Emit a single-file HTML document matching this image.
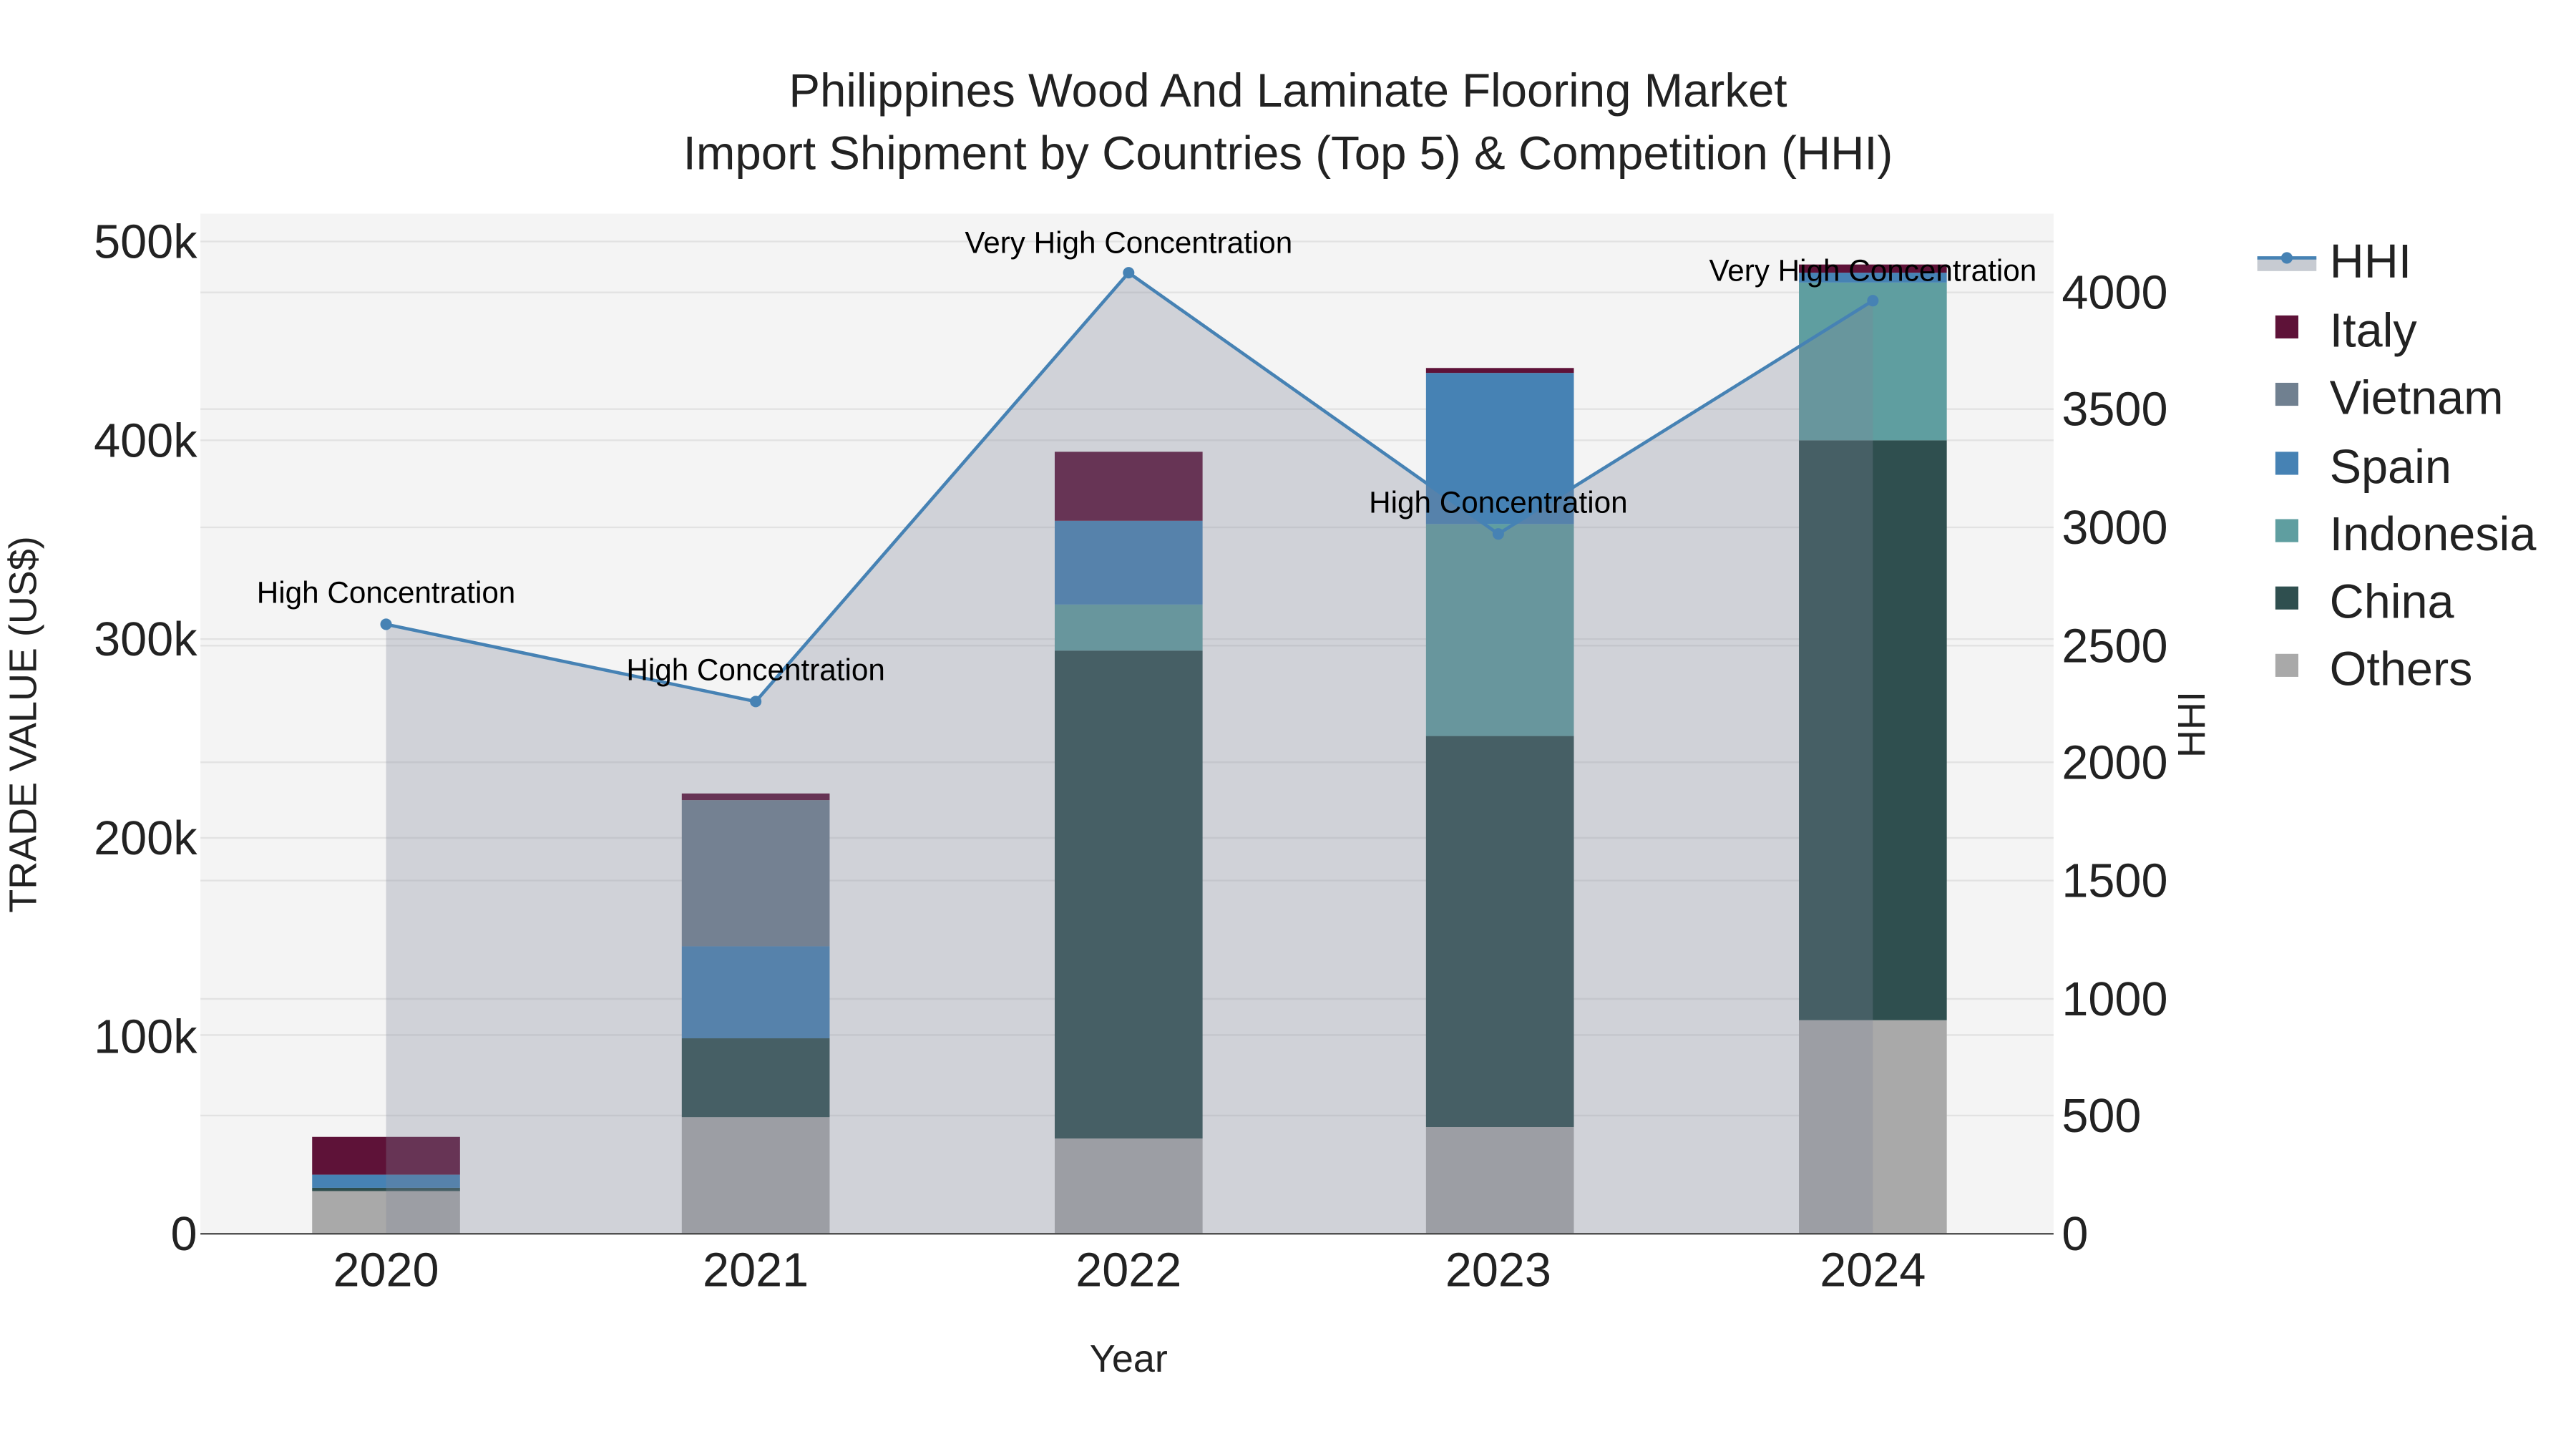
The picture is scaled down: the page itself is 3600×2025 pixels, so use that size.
<!DOCTYPE html>
<html><head><meta charset="utf-8"><style>
html,body{margin:0;padding:0;background:#fff;}
svg{display:block;}
text{font-family:"Liberation Sans",Arial,sans-serif;}
</style></head><body>
<svg width="3600" height="2025" viewBox="0 0 1568 882" xmlns="http://www.w3.org/2000/svg">
<rect width="1568" height="882" fill="#fff"/>
<rect x="122" y="130" width="1128" height="621" fill="#f4f4f4"/>
<g stroke="#e2e2e2" stroke-width="1">
<line x1="122" x2="1250" y1="147" y2="147"/><line x1="122" x2="1250" y1="268" y2="268"/>
<line x1="122" x2="1250" y1="389" y2="389"/><line x1="122" x2="1250" y1="510" y2="510"/>
<line x1="122" x2="1250" y1="630" y2="630"/>
<line x1="122" x2="1250" y1="178" y2="178"/><line x1="122" x2="1250" y1="249" y2="249"/>
<line x1="122" x2="1250" y1="321" y2="321"/><line x1="122" x2="1250" y1="393" y2="393"/>
<line x1="122" x2="1250" y1="464" y2="464"/><line x1="122" x2="1250" y1="536" y2="536"/>
<line x1="122" x2="1250" y1="608" y2="608"/><line x1="122" x2="1250" y1="679" y2="679"/>
</g>
<g>
<rect x="190" y="725" width="90" height="26" fill="#a9a9a9"/>
<rect x="190" y="723" width="90" height="2" fill="#2f4f4f"/>
<rect x="190" y="715" width="90" height="8" fill="#4682b4"/>
<rect x="190" y="692" width="90" height="23" fill="#5e1238"/>
<rect x="415" y="680" width="90" height="71" fill="#a9a9a9"/>
<rect x="415" y="632" width="90" height="48" fill="#2f4f4f"/>
<rect x="415" y="576" width="90" height="56" fill="#4682b4"/>
<rect x="415" y="487" width="90" height="89" fill="#708090"/>
<rect x="415" y="483" width="90" height="4" fill="#5e1238"/>
<rect x="642" y="693" width="90" height="58" fill="#a9a9a9"/>
<rect x="642" y="396" width="90" height="297" fill="#2f4f4f"/>
<rect x="642" y="368" width="90" height="28" fill="#5f9ea0"/>
<rect x="642" y="317" width="90" height="51" fill="#4682b4"/>
<rect x="642" y="275" width="90" height="42" fill="#5e1238"/>
<rect x="868" y="686" width="90" height="65" fill="#a9a9a9"/>
<rect x="868" y="448" width="90" height="238" fill="#2f4f4f"/>
<rect x="868" y="319" width="90" height="129" fill="#5f9ea0"/>
<rect x="868" y="227" width="90" height="92" fill="#4682b4"/>
<rect x="868" y="224" width="90" height="3" fill="#5e1238"/>
<rect x="1095" y="621" width="90" height="130" fill="#a9a9a9"/>
<rect x="1095" y="268" width="90" height="353" fill="#2f4f4f"/>
<rect x="1095" y="172" width="90" height="96" fill="#5f9ea0"/>
<rect x="1095" y="166" width="90" height="6" fill="#4682b4"/>
<rect x="1095" y="161" width="90" height="5" fill="#5e1238"/>
</g>
<polygon points="235,751 235,380 460,427 687,166 912,325 1140,183 1140,751" fill="rgb(125,134,152)" fill-opacity="0.3"/>
<polyline points="235,380 460,427 687,166 912,325 1140,183" fill="none" stroke="#4682b4" stroke-width="2"/>
<g fill="#4682b4"><circle cx="235" cy="380" r="3.5"/><circle cx="460" cy="427" r="3.5"/><circle cx="687" cy="166" r="3.5"/><circle cx="912" cy="325" r="3.5"/><circle cx="1140" cy="183" r="3.5"/></g>
<line x1="122" x2="1250" y1="751" y2="751" stroke="#444" stroke-width="1"/>
<g font-size="18.4" text-anchor="middle" fill="#000">
<text x="235" y="367">High Concentration</text>
<text x="460" y="414">High Concentration</text>
<text x="687" y="154">Very High Concentration</text>
<text x="912" y="312">High Concentration</text>
<text x="1140" y="171">Very High Concentration</text>
</g>
<g font-size="29" text-anchor="end" fill="#222">
<text x="120" y="761">0</text><text x="120" y="641">100k</text><text x="120" y="520">200k</text>
<text x="120" y="399">300k</text><text x="120" y="278">400k</text><text x="120" y="157">500k</text>
</g>
<g font-size="29" text-anchor="start" fill="#222">
<text x="1255" y="761">0</text><text x="1255" y="689">500</text><text x="1255" y="618">1000</text>
<text x="1255" y="546">1500</text><text x="1255" y="474">2000</text><text x="1255" y="403">2500</text>
<text x="1255" y="331">3000</text><text x="1255" y="259">3500</text><text x="1255" y="188">4000</text>
</g>
<g font-size="29" text-anchor="middle" fill="#222">
<text x="235" y="783">2020</text><text x="460" y="783">2021</text><text x="687" y="783">2022</text>
<text x="912" y="783">2023</text><text x="1140" y="783">2024</text>
</g>
<text x="687" y="835" font-size="23.5" text-anchor="middle" fill="#222">Year</text>
<text transform="translate(22,441) rotate(-90)" font-size="23.5" text-anchor="middle" fill="#222">TRADE VALUE (US$)</text>
<text transform="translate(1342,441) rotate(-90)" font-size="23.5" text-anchor="middle" fill="#222">HHI</text>
<g font-size="28.5" text-anchor="middle" fill="#222">
<text x="784" y="65">Philippines Wood And Laminate Flooring Market</text>
<text x="784" y="103">Import Shipment by Countries (Top 5) &amp; Competition (HHI)</text>
</g>
<rect x="1374" y="157" width="36" height="8" fill="#c7cbd2"/>
<line x1="1374" x2="1410" y1="157" y2="157" stroke="#4682b4" stroke-width="2"/>
<circle cx="1392" cy="157" r="3.5" fill="#4682b4"/>
<g>
<rect x="1385" y="192" width="14" height="14" fill="#5e1238"/>
<rect x="1385" y="233" width="14" height="14" fill="#708090"/>
<rect x="1385" y="275" width="14" height="14" fill="#4682b4"/>
<rect x="1385" y="316" width="14" height="14" fill="#5f9ea0"/>
<rect x="1385" y="357" width="14" height="14" fill="#2f4f4f"/>
<rect x="1385" y="398" width="14" height="14" fill="#a9a9a9"/>
</g>
<g font-size="29" fill="#222">
<text x="1418" y="169">HHI</text>
<text x="1418" y="211">Italy</text>
<text x="1418" y="252">Vietnam</text>
<text x="1418" y="294">Spain</text>
<text x="1418" y="335">Indonesia</text>
<text x="1418" y="376">China</text>
<text x="1418" y="417">Others</text>
</g>
</svg>
</body></html>
